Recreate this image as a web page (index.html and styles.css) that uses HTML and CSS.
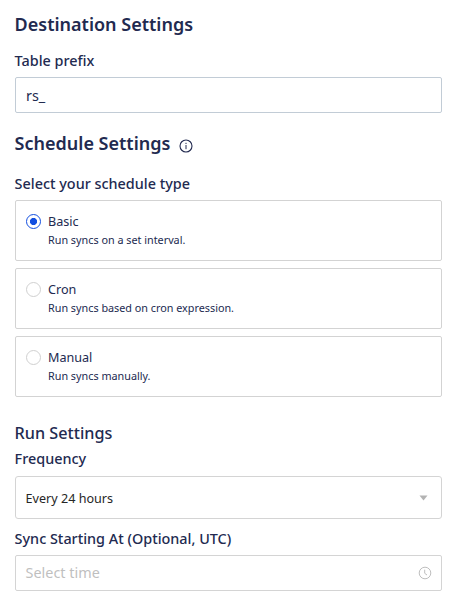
FILE: index.html
```html
<!DOCTYPE html>
<html lang="en">
<head>
<meta charset="utf-8">
<title>Destination Settings</title>
<link rel="stylesheet" href="styles.css">
</head>
<body>
<main class="settings">
  <h2 class="heading">Destination Settings</h2>
  <div class="label label-prefix">Table prefix</div>
  <div class="field field-prefix">rs_</div>
  <h2 class="heading heading-schedule">Schedule Settings
    <svg class="info" width="14" height="14" viewBox="0 0 14 14" fill="none" stroke="currentColor"><circle cx="7" cy="7" r="6" stroke-width="1.1"/><path d="M7 6v4.2M7 3.8v1.2" stroke-width="1"/></svg>
  </h2>
  <div class="label label-type">Select your schedule type</div>
  <div class="options">
    <div class="option"><span class="radio radio-on"></span><div><div class="name">Basic</div><div class="hint">Run syncs on a set interval.</div></div></div>
    <div class="option"><span class="radio"></span><div><div class="name">Cron</div><div class="hint">Run syncs based on cron expression.</div></div></div>
    <div class="option"><span class="radio"></span><div><div class="name">Manual</div><div class="hint">Run syncs manually.</div></div></div>
  </div>
  <h3 class="subheading">Run Settings</h3>
  <div class="label label-frequency">Frequency</div>
  <div class="field field-select"><span class="value">Every 24 hours</span><svg class="caret" width="9" height="6" viewBox="0 0 9 6"><path d="M.5.6h8L4.5 5.4z" fill="#b3b3b3"/></svg></div>
  <div class="label label-time">Sync Starting At (Optional, UTC)</div>
  <div class="field field-time"><span class="placeholder">Select time</span><svg width="14" height="14" viewBox="0 0 14 14" fill="none" stroke="#bfbfbf"><circle cx="7" cy="7" r="5.8"/><path d="M6.7 3.7v3.6l2.3 1.7"/></svg></div>
</main>
</body>
</html>
```

FILE: styles.css
```css
* { box-sizing: border-box; }
body { margin: 0; background: #fff; color: #222a50; font-family: "Noto Sans", sans-serif; }
.settings { padding: 12px 18px 0 15px; }
.heading { display: flex; align-items: center; height: 24px; margin: 0; font-size: 18px; font-weight: 600; line-height: 24px; }
.heading-schedule { margin-top: 18px; }
.info { margin: 5px 0 0 8.5px; }
.label { height: 20px; font-size: 14.4px; font-weight: 500; line-height: 20px; }
.heading, .label, .subheading { text-indent: -0.4px; }
.label-prefix { margin-top: 15px; }
.field { display: flex; align-items: center; justify-content: space-between; border: 1px solid #d4d4d4; border-radius: 2px; padding: 0 9px 0 9.6px; }
.field-prefix { height: 36px; margin-top: 6px; padding-left: 10px; border-color: #c2ccd6; font-size: 14.4px; }
.label-type { margin-top: 19px; }
.options { display: flex; flex-direction: column; gap: 7px; margin-top: 6px; }
.option { display: flex; height: 61px; border: 1px solid #d3d3d3; border-radius: 2px; padding: 12px 10px 0; }
.radio { width: 15px; height: 15px; flex: none; margin: 1px 7px 0 0; border: 1px solid #d0d0d0; border-radius: 50%; }
.radio-on { border-color: #134fe0; background: radial-gradient(circle, #134fe0 3.2px, transparent 3.9px); }
.name { font-size: 12.6px; line-height: 18px; }
.hint { font-size: 10.8px; line-height: 17px; }
.subheading { height: 22px; margin: 25px 0 0; font-size: 16.2px; font-weight: 500; line-height: 22px; }
.label-frequency { margin-top: 5px; }
.field-select { height: 43px; margin-top: 7px; border-radius: 3px; color: #262626; font-size: 12.6px; }
.value { padding-top: 2px; }
.caret { margin-right: 4px; }
.label-time { margin-top: 10px; }
.field-time { height: 36px; margin-top: 6px; color: #bfbfbf; font-size: 14.4px; }
.placeholder { padding-bottom: 1px; }
```
